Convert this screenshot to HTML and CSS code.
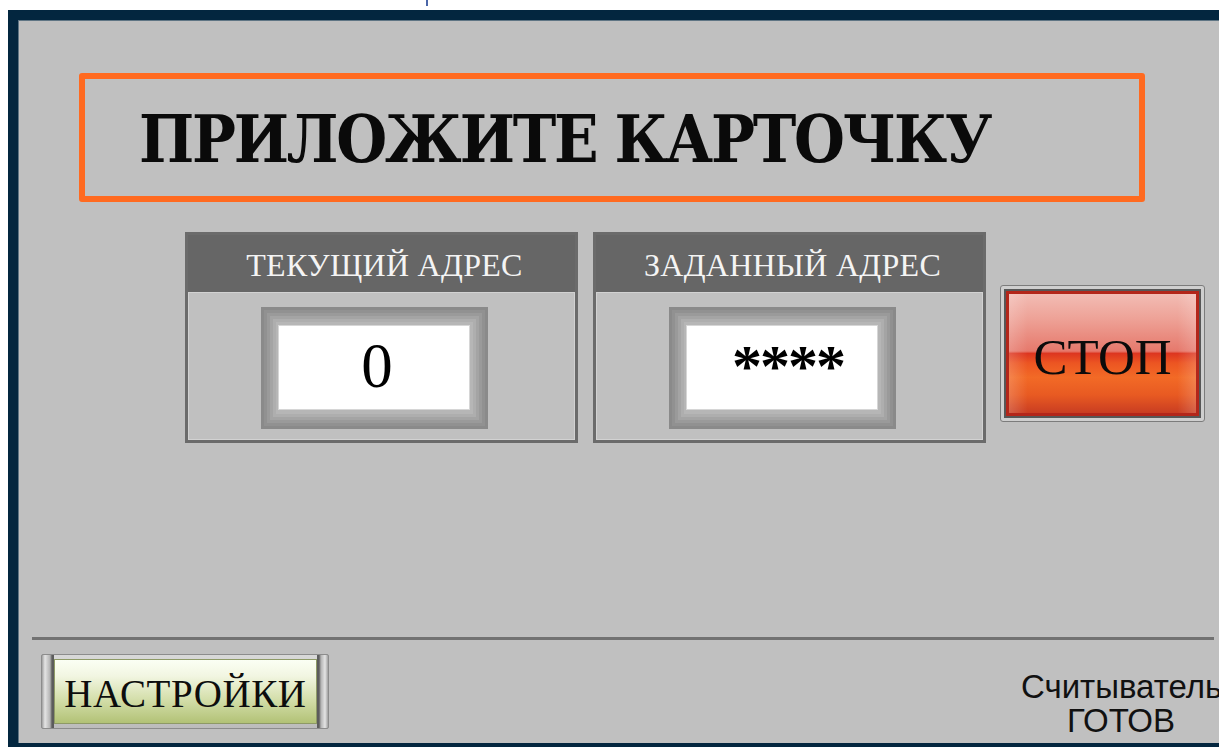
FILE: index.html
```html
<!DOCTYPE html>
<html lang="ru">
<head>
<meta charset="utf-8">
<title>Считыватель карт</title>
<link rel="stylesheet" href="styles.css">
</head>
<body>
  <div class="topstrip"><span class="tick"></span></div>
  <main class="screen">
    <div class="banner">
      <h1 class="banner-text">ПРИЛОЖИТЕ КАРТОЧКУ</h1>
    </div>

    <div class="row">
      <section class="panel">
        <div class="panel-head">ТЕКУЩИЙ АДРЕС</div>
        <div class="panel-body">
          <div class="well"><div class="well-face">0</div></div>
        </div>
      </section>
      <section class="panel">
        <div class="panel-head">ЗАДАННЫЙ АДРЕС</div>
        <div class="panel-body">
          <div class="well"><div class="well-face well-face--mask">****</div></div>
        </div>
      </section>
      <button class="stop" type="button">
        <span class="stop-rim"><span class="stop-face">СТОП</span></span>
      </button>
    </div>

    <hr class="divider">

    <footer class="footer">
      <button class="settings" type="button"><span class="settings-face">НАСТРОЙКИ</span></button>
      <div class="status">Считыватель<br>ГОТОВ</div>
    </footer>
  </main>
</body>
</html>
```

FILE: styles.css
```css
html, body {
  margin: 0;
  padding: 0;
  background: #ffffff;
  overflow: hidden;
}

body {
  width: 1219px;
  height: 747px;
  font-family: "Liberation Serif", "Times New Roman", serif;
}

/* thin white strip above the terminal frame */
.topstrip {
  height: 10px;
  display: flex;
}
.tick {
  width: 2px;
  height: 6px;
  margin-left: 426px;
  background: #4a66a8;
}

/* terminal screen with its navy frame */
.screen {
  box-sizing: border-box;
  margin-left: 8px;
  height: 737px;
  border-top: 10px solid #03263f;
  border-left: 10px solid #03263f;
  border-bottom: 4px solid #03263f;
  background: #c0c0c0;
  box-shadow: inset 1px 1px 0 #5f7584;
  display: flex;
  flex-direction: column;
  overflow: hidden;
}

/* orange prompt banner */
.banner {
  box-sizing: border-box;
  margin: 53px 0 0 61px;
  width: 1066px;
  height: 129px;
  border: 6px solid #ff6a20;
  border-radius: 3px;
  display: flex;
  align-items: center;
}
.banner-text {
  margin: 0 0 0 54px;
  font-family: "DejaVu Serif Condensed", "DejaVu Serif", serif;
  font-stretch: condensed;
  font-weight: bold;
  font-size: 65px;
  letter-spacing: -2.2px;
  line-height: 1;
  color: #0a0a0a;
  padding-top: 4px;
  white-space: nowrap;
}

/* address panels + stop button */
.row {
  display: flex;
  align-items: flex-start;
  margin: 30px 0 0 167px;
}

.panel {
  box-sizing: border-box;
  width: 393px;
  height: 211px;
  border: 3px solid #6b6b6b;
  margin-right: 15px;
  background: #c0c0c0;
}
.panel-head {
  box-sizing: border-box;
  height: 57px;
  padding: 4px 0 0 6px;
  background: #666666;
  color: #f4f4f4;
  text-align: center;
  font-size: 32px;
  letter-spacing: 0.3px;
  line-height: 53px;
  white-space: nowrap;
}
.panel-body {
  padding: 15px 0 0 73px;
  box-shadow: inset 0 0 0 1px #d2d2d2;
  height: 148px;
  box-sizing: border-box;
}

/* recessed value display */
.well {
  box-sizing: border-box;
  width: 227px;
  height: 122px;
  padding: 18px 18px 19px 17px;
  background: #b6b6b6;
  box-shadow:
    inset 0 0 0 3px #8a8a8a,
    inset 0 0 0 6px #919191,
    inset 0 0 0 9px #9a9a9a,
    inset 0 0 0 12px #a4a4a4,
    inset 0 0 0 15px #aeaeae;
}
.well-face {
  box-sizing: border-box;
  height: 100%;
  padding-left: 6px;
  background: #ffffff;
  border: 1px solid #d6d6d6;
  text-align: center;
  font-size: 63px;
  line-height: 80px;
  color: #000;
}
.well-face--mask {
  padding-left: 12px;
  font-size: 60px;
  letter-spacing: -2px;
  font-weight: bold;
}

/* red STOP button */
.stop {
  box-sizing: border-box;
  width: 205px;
  height: 137px;
  margin: 53px 0 0 -1px;
  padding: 3px;
  border: 1px solid #7c7c7c;
  border-radius: 3px;
  background: #cfcfcf;
  font: inherit;
  cursor: pointer;
}
.stop-rim {
  display: block;
  box-sizing: border-box;
  height: 100%;
  border: 2px solid #575757;
}
.stop-face {
  display: flex;
  align-items: center;
  justify-content: center;
  box-sizing: border-box;
  height: 100%;
  padding-top: 8px;
  border: 3px solid #b3261a;
  background:
    linear-gradient(90deg, rgba(255,255,255,0.18), rgba(255,255,255,0) 10%, rgba(255,255,255,0) 90%, rgba(255,255,255,0.18)),
    linear-gradient(180deg,
      #f2bcb4 0%,
      #eea398 20%,
      #e6796c 48%,
      #dd3620 50%,
      #ec5522 58%,
      #f26a26 70%,
      #e85a22 85%,
      #c93d22 100%);
  font-size: 51px;
  color: #0b0b0b;
  line-height: 1;
}

.divider {
  margin: 194px 5px 0 14px;
  border: 0;
  height: 3px;
  background: #727272;
}

/* footer: settings button and reader status */
.footer {
  display: flex;
  justify-content: space-between;
  align-items: flex-start;
  margin-top: 14px;
}

.settings {
  box-sizing: border-box;
  width: 288px;
  height: 75px;
  margin-left: 23px;
  padding: 4px 11px 4px 12px;
  border: 1px solid #8c8c8c;
  border-radius: 2px;
  background:
    linear-gradient(90deg,
      #a0a0a0 0, #e4e4e4 3px, #b4b4b4 8px, #5c5c5c 10px, #5c5c5c 12px,
      transparent 12px, transparent calc(100% - 11px),
      #5c5c5c calc(100% - 11px), #5c5c5c calc(100% - 9px), #b4b4b4 calc(100% - 7px), #e4e4e4 calc(100% - 3px), #a0a0a0 100%),
    linear-gradient(180deg, #d8d8d8, #bcbcbc);
  font: inherit;
  cursor: pointer;
}
.settings-face {
  display: flex;
  align-items: center;
  justify-content: center;
  box-sizing: border-box;
  height: 100%;
  padding-top: 3px;
  border: 1px solid #8e9a66;
  background: linear-gradient(180deg, #fbfff4 0%, #f2f6e2 25%, #d6e0ae 60%, #b2c276 100%);
  font-size: 39px;
  letter-spacing: 0.6px;
  line-height: 1;
  color: #0d0d0d;
  white-space: nowrap;
}

.status {
  width: 200px;
  margin: 16px -2px 0 0;
  font-family: "Liberation Sans", Arial, sans-serif;
  font-size: 33px;
  line-height: 34px;
  text-align: center;
  color: #111;
  white-space: nowrap;
}
```
